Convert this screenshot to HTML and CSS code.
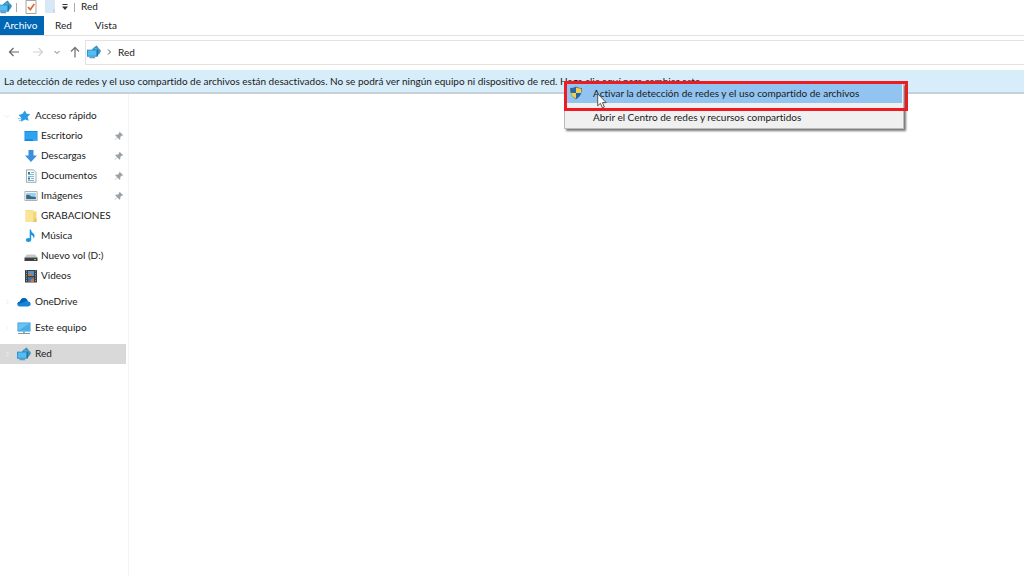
FILE: index.html
```html
<!DOCTYPE html>
<html lang="es">
<head>
<meta charset="utf-8">
<title>Red</title>
<link rel="stylesheet" href="styles.css">
</head>
<body>
<svg class="defs" aria-hidden="true">
  <symbol id="net" viewBox="0 0 14 14">
    <path d="M5 4.500Q6.500 2.500 9.500.5q1.500 1.200 2 2.700 2.200.8 2.400 3-1 3-3.900 4.700L5 9z" fill="#3f93ba"/>
    <path d="M7.500 3.500q2 0 3 1.500" stroke="#7fc2dc" stroke-width=".8" fill="none"/>
    <path d="M0 4.700h10v7H0z" fill="#2387c4"/>
    <path d="M.7 5.400h8.600v5.400H.7z" fill="#55bdf1"/>
    <path d="M10 4.700l1 .5v6l-1 .5z" fill="#1b73a8"/>
    <path d="M2.500 11.700h5l1 1.500h-6z" fill="#5b9cc0"/>
  </symbol>
  <symbol id="pin" viewBox="0 0 10 10">
    <path d="M5.600.8l3.600 3.500-1 .5-.5-.2-1.500 1.700.2 1.600-.8.8L3.400 6.600.7 9.300l-.2-.2 2.600-2.800L1.200 4.200l.8-.7 1.700.2 1.700-1.600-.3-.6z" fill="#9aa1a7"/>
  </symbol>
  <symbol id="chev" viewBox="0 0 8 8"><path d="M3 1.500l2.500 2.500L3 6.500" fill="none" stroke="currentColor"/></symbol>
  <symbol id="down" viewBox="0 0 8 8"><path d="M1.500 3L4 5.500 6.500 3" fill="none" stroke="currentColor"/></symbol>
</svg>

<header class="titlebar">
  <svg class="icon app"><use href="#net"/></svg>
  <span class="sep"></span>
  <button class="tool" aria-label="Propiedades"><svg class="icon" viewBox="0 0 14 14"><path d="M2 .5h10v13H2z" fill="#fdfdfd" stroke="#a5a5a5"/><path d="M4 7l2.300 2.600L10.300 4" fill="none" stroke="#df6b35" stroke-width="1.700"/></svg></button>
  <button class="tool" aria-label="Nueva carpeta"><svg class="icon" viewBox="0 0 14 14"><path d="M2 0h10v13H2z" fill="#d9e8f7"/><path d="M10 9h2v4h-2z" fill="#c8dbef"/></svg></button>
  <button class="tool small" aria-label="Personalizar barra"><svg class="glyph" viewBox="0 0 8 8"><path d="M1.500 1h5v1h-5zM1 3.600h6L4 7z" fill="#333"/></svg></button>
  <span class="sep"></span>
  <h1 class="title">Red</h1>
</header>

<nav class="ribbon">
  <button class="tab file">Archivo</button>
  <button class="tab">Red</button>
  <button class="tab">Vista</button>
</nav>

<div class="navbar">
  <div class="arrows">
    <button class="nav" aria-label="Atrás"><svg class="arrow" viewBox="0 0 12 12"><path d="M11 6H1.500M5.500 2l-4 4 4 4" fill="none" stroke="#666" stroke-width="1.200"/></svg></button>
    <button class="nav" aria-label="Adelante"><svg class="arrow" viewBox="0 0 12 12"><path d="M1 6h9.500M6.500 2l4 4-4 4" fill="none" stroke="#d2d2d2" stroke-width="1.200"/></svg></button>
    <button class="nav recent" aria-label="Recientes"><svg class="glyph"><use href="#down"/></svg></button>
    <button class="nav" aria-label="Subir"><svg class="arrow" viewBox="0 0 12 12"><path d="M6 11.500V1.500M2 5.500l4-4 4 4" fill="none" stroke="#777" stroke-width="1.300"/></svg></button>
  </div>
  <div class="address">
    <svg class="icon"><use href="#net"/></svg>
    <svg class="glyph"><use href="#chev"/></svg>
    <a class="crumb" href="#red">Red</a>
  </div>
</div>

<div class="notice">
  <button class="notice-text">La detección de redes y el uso compartido de archivos están desactivados. No se podrá ver ningún equipo ni dispositivo de red. Haga clic aquí para cambiar esto...</button>
  <div class="menu" role="menu">
    <button class="item active" role="menuitem">
      <svg class="icon" viewBox="0 0 14 14"><path d="M7 .5Q10 2 13 2q0 8-6 11.500Q1 10 1 2q3 0 6-1.500z" fill="#5c6670"/><path d="M7 1.600V7H2Q1.800 5 1.800 2.800 5 2.600 7 1.600z" fill="#1e69b4"/><path d="M7 1.600V7h5q.2-2 .2-4.200Q9 2.600 7 1.600z" fill="#f6cf45"/><path d="M2 7h5v5.500Q3 10.500 2 7z" fill="#f6cf45"/><path d="M12 7H7v5.500q4-2 5-5.500z" fill="#1e69b4"/></svg>
      Activar la detección de redes y el uso compartido de archivos
    </button>
    <button class="item" role="menuitem">Abrir el Centro de redes y recursos compartidos</button>
    <div class="marker"></div>
    <svg class="cursor" viewBox="0 0 10 16"><path d="M.7.8v12l2.700-2.500 2 4.600 2-.9-2-4.400h3.800z" fill="#fff" stroke="#444" stroke-width=".9"/></svg>
  </div>
</div>

<main class="content">
  <nav class="sidebar">
    <a class="row top" href="#rapido"><svg class="glyph twist"><use href="#down"/></svg><svg class="icon" viewBox="0 0 14 14"><path d="M8 1.500l1.500 3.200 3.700.4-2.600 2.800 1.100 3.900-3.600-1.300L4 12.700l.2-4L1.500 6.100l3.700-1z" fill="#2b9be6"/><path d="M1 9.500h4M2 11.500h3" stroke="#6ab9ee" stroke-width=".8"/></svg><span class="name">Acceso rápido</span></a>
    <a class="row sub" href="#escritorio"><svg class="icon" viewBox="0 0 14 14"><path d="M.5 2h13v10H.5z" fill="#1688dd"/><path d="M1.200 2.800h11.600v7.400H1.200z" fill="#2ba4f4"/><path d="M9 11h4" stroke="#9cd8ff" stroke-width=".8"/></svg><span class="name">Escritorio</span><svg class="pin"><use href="#pin"/></svg></a>
    <a class="row sub" href="#descargas"><svg class="icon" viewBox="0 0 14 14"><path d="M4.500 1h5v5.500H13L7 13 1 6.500h3.500z" fill="#3b8fdd"/></svg><span class="name">Descargas</span><svg class="pin"><use href="#pin"/></svg></a>
    <a class="row sub" href="#documentos"><svg class="icon" viewBox="0 0 14 14"><path d="M2.500.8h7l2.500 2.500v10H2.500z" fill="#f8fbfc" stroke="#8c999f" stroke-width=".8"/><path d="M7 3.500h3M4 5.500h6M4 7.500h6M7 9.500h3M4 11.500h6" stroke="#6fb3c6" stroke-width=".9"/><path d="M4 3h2v2H4zM4 8.500h2v2H4z" fill="#317b9a"/></svg><span class="name">Documentos</span><svg class="pin"><use href="#pin"/></svg></a>
    <a class="row sub" href="#imagenes"><svg class="icon" viewBox="0 0 14 14"><path d="M.9 2.500h12.200v9H.9z" fill="#fff" stroke="#96a0a6" stroke-width=".8"/><path d="M2.200 3.800h9.600v6.400H2.200z" fill="#99d0ef"/><path d="M2.200 6q3-1 5 1.500l4.600.5v2.200H2.200z" fill="#3c6880"/></svg><span class="name">Imágenes</span><svg class="pin"><use href="#pin"/></svg></a>
    <a class="row sub" href="#grabaciones"><svg class="icon" viewBox="0 0 14 14"><path d="M1.500 1h8v1.500h3V13h-11z" fill="#f4d778"/><path d="M2 1.500h7V13H2z" fill="#fbe398"/><path d="M10 9.500h2.500V13H10z" fill="#e7c55f"/></svg><span class="name">GRABACIONES</span></a>
    <a class="row sub" href="#musica"><svg class="icon" viewBox="0 0 14 14"><ellipse cx="4.500" cy="11" rx="2.700" ry="2" fill="#1c95e2"/><path d="M5.700 11V.5h1.200q.2 2.500 2.600 4 2 2 .2 5 0-2.800-2.500-3.800V11z" fill="#1c95e2"/></svg><span class="name">Música</span></a>
    <a class="row sub" href="#nuevo"><svg class="icon" viewBox="0 0 14 14"><path d="M3 5.500h8l2.500 3h-13z" fill="#c5c8ca"/><path d="M.5 8.500h13v3.500H.5z" fill="#3d4144"/><path d="M10 10h2v1h-2z" fill="#75dc6e"/></svg><span class="name">Nuevo vol (D:)</span></a>
    <a class="row sub" href="#videos"><svg class="icon" viewBox="0 0 14 14"><path d="M1 1h12v12.500H1z" fill="#3a3e45"/><path d="M4 2h6v5H4z" fill="#4a94d4"/><path d="M4 8h6v5H4z" fill="#4170a9"/><path d="M4 6l3-2 3 3H4zM6 11l4-2v4H7z" fill="#c07a45"/><path d="M2.500 1.500v12M11.500 1.500v12" stroke="#a5a9ad" stroke-dasharray="1 1.400"/></svg><span class="name">Videos</span></a>
    <a class="row top group" href="#onedrive"><svg class="glyph twist"><use href="#chev"/></svg><svg class="icon" viewBox="0 0 14 14"><path d="M3 11.500Q0 11.200.3 8.700.7 6.500 3 6.400 4.200 3 7.200 3q2.800.2 3.700 3.200 2.700.3 2.900 2.700-.2 2.400-2.800 2.600z" fill="#1685d8"/><path d="M.3 8.700Q.7 6.500 3 6.400 4.200 3 7.200 3q2.300.2 3.300 2.400L4.500 8z" fill="#0763b3"/></svg><span class="name">OneDrive</span></a>
    <a class="row top group" href="#equipo"><svg class="glyph twist"><use href="#chev"/></svg><svg class="icon" viewBox="0 0 14 14"><path d="M.5 1.500h13v9H.5z" fill="#3b91ca"/><path d="M1.200 2.200h11.600v7.500H1.200z" fill="#64c5f4"/><path d="M1.200 9.700l11.600-7.500v7.500z" fill="#46afe8"/><path d="M6 10.500h2V12H6z" fill="#8fa6b3"/><path d="M1 12h12v1H1z" fill="#8298a5"/></svg><span class="name">Este equipo</span></a>
    <a class="row top group selected" href="#red"><svg class="glyph twist"><use href="#chev"/></svg><svg class="icon"><use href="#net"/></svg><span class="name">Red</span></a>
  </nav>
  <section class="files" aria-label="Red"></section>
</main>
</body>
</html>
```
FILE: styles.css
```css
* { box-sizing: border-box; }
body {
  margin: 0;
  min-height: 100vh;
  display: flex;
  flex-direction: column;
  background: #fff;
  color: #1a1a1a;
  font: 10px/14px Lato, "Noto Sans", sans-serif;
  font-variant-ligatures: none;
}
button {
  margin: 0;
  padding: 0;
  border: 0;
  background: none;
  color: inherit;
  font: inherit;
  font-variant-ligatures: none;
}
a { color: inherit; text-decoration: none; }
svg { flex: none; display: block; }
.defs { position: absolute; width: 0; height: 0; }
.icon { width: 14px; height: 14px; }
.glyph { width: 8px; height: 8px; }
.arrow { width: 12px; height: 12px; }

.titlebar { display: flex; align-items: center; height: 16px; padding-bottom: 2px; }
.app { margin-left: -2px; }
.sep { width: 1px; height: 9px; margin: 0 4px; background: #aaa; }
.tool { margin: 0 2px; padding-left: 1px; }
.small { margin: 0 1px; }
.title { margin: 0 0 0 2px; padding-bottom: 2px; font: inherit; }

.ribbon { display: flex; height: 20px; border-bottom: 1px solid #e2e2e2; }
.tab { height: 19px; padding: 0 12px 2px 11px; }
.file { width: 44px; padding: 0 3px 2px 0; background: #0067b5; color: #fff; }

.navbar { display: flex; padding: 4px 0 5px; }
.arrows { display: flex; align-items: center; width: 85px; padding: 0 0 1px 8px; gap: 12px; }
.recent { margin: 0 -4px 0 -3px; color: #777; }
.address {
  flex: 1;
  display: flex;
  align-items: center;
  gap: 4px;
  height: 25px;
  padding: 0 0 2px 1px;
  border: 1px solid #e2e2e2;
  border-right: 0;
  color: #555;
}
.crumb { margin-left: 1px; color: #1a1a1a; }

.notice { position: relative; height: 24px; background: #d7edf9; border-bottom: 2px solid #c6d2d8; }
.notice-text { height: 23px; padding: 0 0 2px 4px; white-space: nowrap; }

.menu {
  position: absolute;
  top: 13px;
  left: 564px;
  width: 340px;
  padding: 0 1px 1px 2px;
  border: 1px solid #bbb;
  background: #f0f0f0;
  box-shadow: 2px 2px 2px #777;
}
.item {
  position: relative;
  display: block;
  width: 100%;
  height: 19px;
  padding: 0 0 2px 26px;
  text-align: left;
  white-space: nowrap;
}
.item .icon { position: absolute; left: 2px; top: 2px; }
.item + .item { margin-top: 5px; }
.active { background: #91c4f0; }
.marker { position: absolute; left: -1px; top: -3px; width: 344px; height: 30px; border: 3px solid #ed1c24; }
.cursor { position: absolute; left: 32px; top: 9px; width: 10px; height: 16px; }

.content { flex: 1; display: flex; }
.sidebar { width: 129px; padding: 12px 2px 0 0; border-right: 1px solid #f3f3f3; }
.row { display: flex; align-items: center; height: 20px; gap: 4px; }
.name { padding-bottom: 2px; }
.top { padding-left: 3px; }
.sub { padding-left: 24px; gap: 3px; }
.group { margin-top: 6px; }
.twist { margin-right: 2px; color: #eee; }
.selected { background: #d9d9d9; }
.pin { width: 10px; height: 10px; margin: 0 2px 0 auto; }
.files { flex: 1; }
```
